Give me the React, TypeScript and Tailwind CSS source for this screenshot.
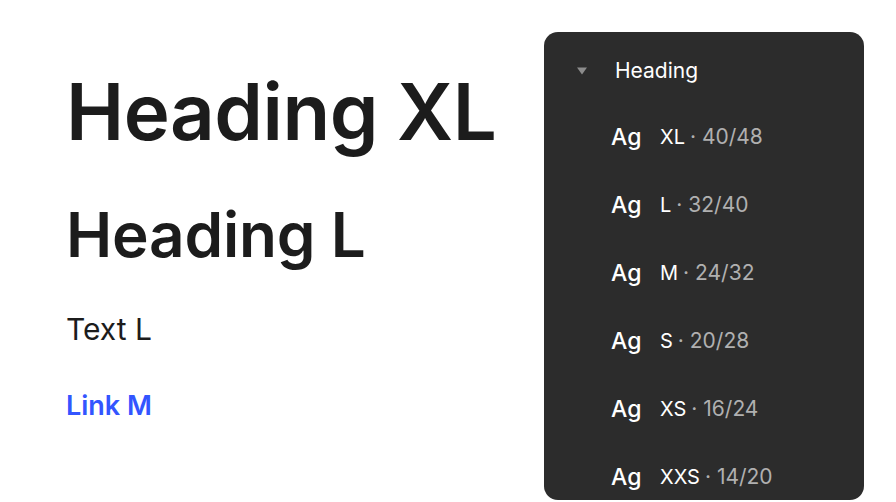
const SCALES = [
  { name: "XL", spec: "40/48" },
  { name: "L", spec: "32/40" },
  { name: "M", spec: "24/32" },
  { name: "S", spec: "20/28" },
  { name: "XS", spec: "16/24" },
  { name: "XXS", spec: "14/20" },
];

function StylePanel() {
  return (
    <div className="mt-[32px] mr-[32px] h-[468px] w-[320px] shrink-0 overflow-hidden rounded-[14px] bg-[#2c2c2c] pt-[7px]">
      <div className="flex h-[64px] items-center">
        <svg width="12" height="8" viewBox="0 0 12 8" className="ml-[32px]">
          <path d="M1 0.5h10L6 7.5z" fill="#8c8c8c" />
        </svg>
        <span className="ml-[27px] text-[21px] font-normal text-white">Heading</span>
      </div>
      {SCALES.map((s) => (
        <div key={s.name} className="flex h-[68px] items-center pl-[67px]">
          <span className="w-[33px] text-[23px] font-medium text-white">Ag</span>
          <span className="ml-[16px] text-[20px] font-normal text-white">{s.name}</span>
          <span className="ml-[5px] text-[21px] font-normal text-[#b0b0b0]">· {s.spec}</span>
        </div>
      ))}
    </div>
  );
}

export default function App() {
  return (
    <div className="flex h-[502px] w-[896px] overflow-hidden bg-white font-['Inter',sans-serif] text-[#1c1c1c]">
      <div className="flex flex-1 flex-col pl-[66px] pt-[69px]">
        <h1 className="text-[78px] leading-[86px] font-semibold tracking-[-0.5px]">Heading XL</h1>
        <h2 className="mt-[47px] text-[62px] leading-[66px] font-semibold tracking-[-0.2px]">Heading L</h2>
        <p className="mt-[41px] text-[30px] leading-[40px]">Text L</p>
        <a className="mt-[39px] text-[27px] leading-[36px] font-semibold text-[#3355ff]">Link M</a>
      </div>
      <StylePanel />
    </div>
  );
}
